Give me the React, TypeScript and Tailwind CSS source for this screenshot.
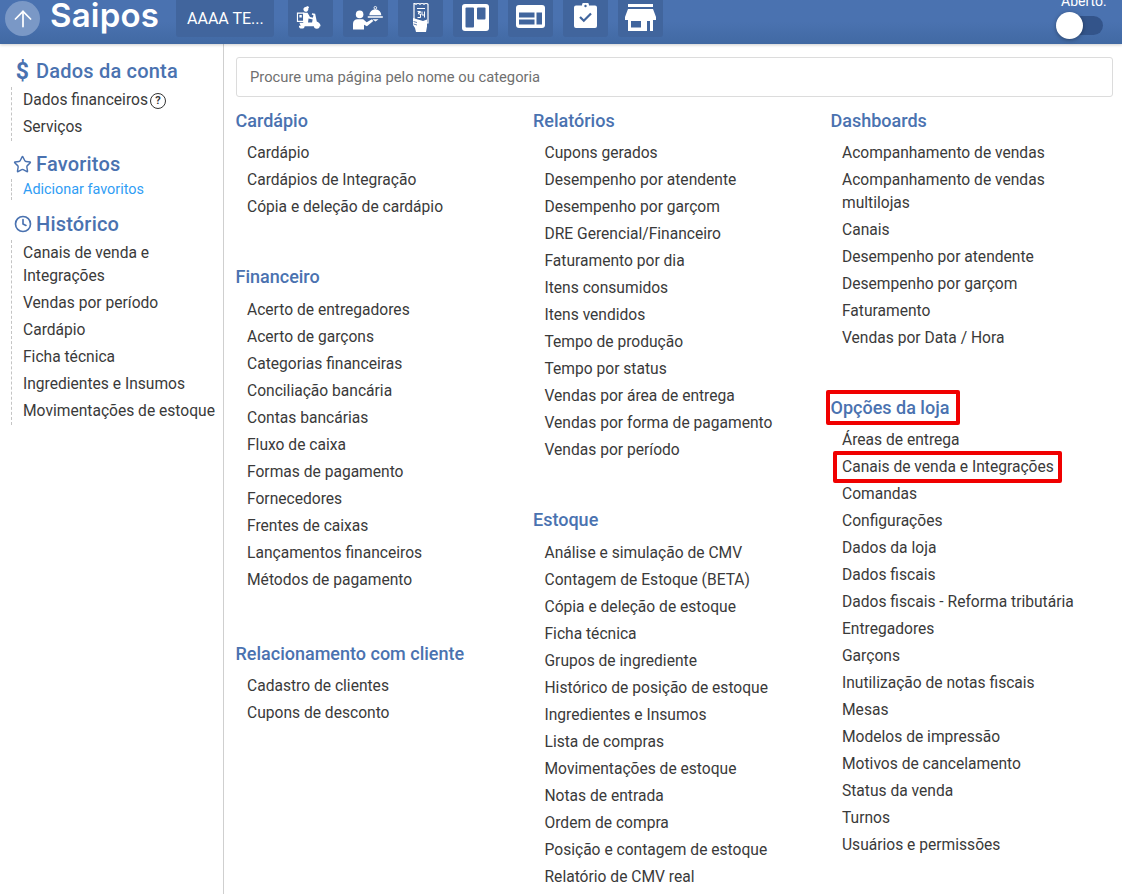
import { ArrowUp, Clock, Star } from 'lucide-react';

const FONT = "font-['Roboto',sans-serif]";

function ScooterIcon() {
  return (
    <svg viewBox="0 0 28 26" className="w-[28px] h-[25px] -mt-[2px] mr-[3px]" fill="white">
      <path d="M9 2.500l4-1.500 1.200 2-1 .5A2.600 2.600 0 1 1 9 2.500z" />
      <path d="M8 8h4.500l2.500 4.500 3.500.8-.4 1.800-4.600-1-.5 4h4.200l1.400-7.600-1.700-.4.3-1.500 3.200.6 1.700 8c2.200.6 3.800 2.400 4 4.800H5.500L4 18.500h4z" />
      <path d="M2 8.500h6.500V17H2z" fill="none" stroke="white" strokeWidth="1.200" />
      <path d="M4 10.500h2.500v2.500H4z" />
      <path d="M3.500 21.500a3 3 0 1 0 6 0z" />
      <path d="M19 21.500a3.100 3.100 0 1 0 6.200 0z" />
    </svg>
  );
}

function WaiterIcon() {
  return (
    <svg viewBox="0 0 34 28" className="w-[30px] h-[25px] -mt-[2px] ml-[4px]" fill="white">
      <circle cx="7.500" cy="10.500" r="4.300" />
      <path d="M0 27.500V21c0-3.200 2.300-5 5-5h6.500l4 3.500 6-3.500 1.500 2-7.200 6-3.300-1.800v5.300z" />
      <path d="M18.500 11.500a6.800 6.800 0 0 1 13.600 0z" />
      <rect x="16.500" y="12.500" width="17.500" height="1.700" rx="0.800" />
      <circle cx="25.300" cy="3" r="1.500" fill="none" stroke="white" strokeWidth="1" />
      <path d="M22 16h7l-3.500 2.500z" />
    </svg>
  );
}

function ReceiptIcon() {
  return (
    <svg viewBox="0 0 16 29" className="w-[16px] h-[29px] -mt-[2px]">
      <path d="M1 0l2 1.300L5 0l2 1.300L9 0l2 1.300L13 0l2 1.300V20H1z" fill="none" stroke="white" strokeWidth="1.200" />
      <path d="M4 5h8v1H4z" fill="white" />
      <path d="M4.500 8.500h3v1H5.500v1.500h2v3.500h-3M9 8.500v3.500h2.500M11.500 8.500v6" fill="none" stroke="white" strokeWidth="1" />
      <path d="M0 15l5 1.500 5 1.500 4-1.500v7L13 29H3l-1-4-2-3z" fill="white" />
      <path d="M0.500 18.500l3.500 1M0.500 21l3.500 1" stroke="#41659d" strokeWidth="0.800" />
    </svg>
  );
}

function BoardIcon() {
  return (
    <svg viewBox="0 0 27 27" className="w-[27px] h-[27px] -mt-[2px]">
      <rect width="27" height="27" rx="3" fill="white" />
      <rect x="3.500" y="3.500" width="8.500" height="20" rx="1" fill="#41659d" />
      <rect x="15" y="3.500" width="8.500" height="12" rx="1" fill="#41659d" />
    </svg>
  );
}

function LayoutIcon() {
  return (
    <svg viewBox="0 0 29 23" className="w-[29px] h-[23px] -mt-[5px]">
      <rect width="29" height="23" rx="3" fill="white" />
      <rect x="3" y="7.500" width="15.500" height="5" fill="#41659d" />
      <rect x="3" y="14.500" width="15.500" height="5" fill="#41659d" />
      <rect x="20.500" y="7.500" width="5.500" height="12" fill="#41659d" />
    </svg>
  );
}

function ClipboardIcon() {
  return (
    <svg viewBox="0 0 23 25" className="w-[23px] h-[25px] -mt-[7px]">
      <path d="M2 2.500h6a3.500 3.500 0 0 1 7 0h6a2 2 0 0 1 2 2V23a2 2 0 0 1-2 2H2a2 2 0 0 1-2-2V4.500a2 2 0 0 1 2-2z" fill="white" />
      <circle cx="11.500" cy="3" r="1.200" fill="#41659d" />
      <path d="M6 14l3.800 3.800L17 10.500" fill="none" stroke="#41659d" strokeWidth="2.200" />
    </svg>
  );
}

function StoreIcon() {
  return (
    <svg viewBox="0 0 31 27" className="w-[31px] h-[27px] -mt-[2px]">
      <rect x="3" y="0" width="25" height="3" fill="white" />
      <path d="M3 5h25l3 8v3H0v-3z" fill="white" />
      <path d="M3 16h25v11H3z" fill="white" />
      <rect x="6" y="17" width="10" height="6.500" fill="#41659d" />
      <rect x="22" y="17" width="3" height="10" fill="#41659d" />
    </svg>
  );
}

function TopButton({ children }: { children: React.ReactNode }) {
  return (
    <div className="w-[45px] h-[37px] rounded-b-[3px] bg-[#41659d] flex items-center justify-center overflow-hidden">
      {children}
    </div>
  );
}

function Header() {
  return (
    <header className="h-[44px] flex items-start bg-gradient-to-b from-[#4a72b0] via-[#4a72b0] to-[#4169a3] shadow-[0_1px_3px_rgba(0,0,0,0.2)] relative">
      <div className="ml-[5px] mt-[1px] w-[35px] h-[35px] rounded-full bg-[#7a98c6] flex items-center justify-center">
        <ArrowUp className="w-[26px] h-[26px] text-white" strokeWidth={1.6} />
      </div>
      <div className="ml-[10px] w-[126px] h-[44px] font-['Inter',sans-serif] font-semibold text-white text-[33px] leading-[30px] tracking-[0.2px]">
        Saipos
      </div>
      <div className="w-[98px] h-[37px] rounded-b-[3px] bg-[#41659d] text-white text-[16px] flex items-center pl-[11px]">
        AAAA TE...
      </div>
      <div className="ml-[14px] flex gap-[10px]">
        <TopButton><ScooterIcon /></TopButton>
        <TopButton><WaiterIcon /></TopButton>
        <TopButton><ReceiptIcon /></TopButton>
        <TopButton><BoardIcon /></TopButton>
        <TopButton><LayoutIcon /></TopButton>
        <TopButton><ClipboardIcon /></TopButton>
        <TopButton><StoreIcon /></TopButton>
      </div>
      <div className="ml-auto mr-[19px] relative w-[46px] mt-[16px]">
        <span className="absolute left-[4px] -top-[22px] text-white text-[14px] leading-[14px]">Aberto:</span>
        <div className="relative h-[19px] rounded-full bg-[#33548a]">
          <div className="absolute -left-[1px] -top-[4.500px] w-[27px] h-[27px] rounded-full bg-white shadow-[0_1px_4px_rgba(0,0,0,0.35)]" />
        </div>
      </div>
    </header>
  );
}

function SideTitle({ icon, label }: { icon: React.ReactNode; label: string }) {
  return (
    <div className="flex items-center h-[26px] text-[#4a72b0] text-[20px] font-medium tracking-[0.2px]">
      <span className="w-[36px] flex justify-center pl-[9px] shrink-0">{icon}</span>
      {label}
    </div>
  );
}

function SideList({ items }: { items: string[] }) {
  return (
    <ul className="ml-[11px] pl-[11px] border-l border-dashed border-[#c4c4c4] text-[15.6px] text-[#3a3a3a]">
      {items.map((item) => (
        <li key={item} className="py-[2px] leading-[23px]">{item}</li>
      ))}
    </ul>
  );
}

function Sidebar() {
  return (
    <aside className="w-[224px] shrink-0 border-r border-[#cfcfcf] pt-[14px]">
      <SideTitle icon={<span className="text-[23px] font-bold leading-none">$</span>} label="Dados da conta" />
      <ul className="mt-[3px] ml-[11px] pl-[11px] border-l border-dashed border-[#c4c4c4] text-[15.6px] text-[#3a3a3a]">
        <li className="py-[2px] leading-[23px] flex items-center gap-[2px]">
          Dados financeiros
          <span className="w-[16px] h-[16px] rounded-full border-[1.5px] border-[#333] text-[11px] font-bold leading-none flex items-center justify-center">?</span>
        </li>
        <li className="py-[2px] leading-[23px]">Serviços</li>
      </ul>
      <div className="mt-[10px] mb-[2px]">
        <SideTitle icon={<Star className="w-[19px] h-[19px]" strokeWidth={1.8} />} label="Favoritos" />
      </div>
      <div className="ml-[11px] pl-[11px] border-l border-dashed border-[#c4c4c4] text-[14.4px] leading-[21px] text-[#2f9df4]">
        Adicionar favoritos
      </div>
      <div className="mt-[11px] mb-[3px]">
        <SideTitle icon={<Clock className="w-[18px] h-[18px]" strokeWidth={2.2} />} label="Histórico" />
      </div>
      <SideList items={['Canais de venda e Integrações', 'Vendas por período', 'Cardápio', 'Ficha técnica', 'Ingredientes e Insumos', 'Movimentações de estoque']} />
    </aside>
  );
}

type Section = { title: string; items: string[]; mark?: string; titleMark?: boolean; gap: string; headGap: string };

const columns: Section[][] = [
  [
    { title: 'Cardápio', gap: 'mt-0', headGap: 'mb-[6px]', items: ['Cardápio', 'Cardápios de Integração', 'Cópia e deleção de cardápio'] },
    { title: 'Financeiro', gap: 'mt-[43px]', headGap: 'mb-[7px]', items: ['Acerto de entregadores', 'Acerto de garçons', 'Categorias financeiras', 'Conciliação bancária', 'Contas bancárias', 'Fluxo de caixa', 'Formas de pagamento', 'Fornecedores', 'Frentes de caixas', 'Lançamentos financeiros', 'Métodos de pagamento'] },
    { title: 'Relacionamento com cliente', gap: 'mt-[47px]', headGap: 'mb-[6px]', items: ['Cadastro de clientes', 'Cupons de desconto'] },
  ],
  [
    { title: 'Relatórios', gap: 'mt-0', headGap: 'mb-[6px]', items: ['Cupons gerados', 'Desempenho por atendente', 'Desempenho por garçom', 'DRE Gerencial/Financeiro', 'Faturamento por dia', 'Itens consumidos', 'Itens vendidos', 'Tempo de produção', 'Tempo por status', 'Vendas por área de entrega', 'Vendas por forma de pagamento', 'Vendas por período'] },
    { title: 'Estoque', gap: 'mt-[43px]', headGap: 'mb-[7px]', items: ['Análise e simulação de CMV', 'Contagem de Estoque (BETA)', 'Cópia e deleção de estoque', 'Ficha técnica', 'Grupos de ingrediente', 'Histórico de posição de estoque', 'Ingredientes e Insumos', 'Lista de compras', 'Movimentações de estoque', 'Notas de entrada', 'Ordem de compra', 'Posição e contagem de estoque', 'Relatório de CMV real'] },
  ],
  [
    { title: 'Dashboards', gap: 'mt-0', headGap: 'mb-[6px]', items: ['Acompanhamento de vendas', 'Acompanhamento de vendas multilojas', 'Canais', 'Desempenho por atendente', 'Desempenho por garçom', 'Faturamento', 'Vendas por Data / Hora'] },
    { title: 'Opções da loja', gap: 'mt-[43px]', headGap: 'mb-[6px]', titleMark: true, mark: 'Canais de venda e Integrações', items: ['Áreas de entrega', 'Canais de venda e Integrações', 'Comandas', 'Configurações', 'Dados da loja', 'Dados fiscais', 'Dados fiscais - Reforma tributária', 'Entregadores', 'Garçons', 'Inutilização de notas fiscais', 'Mesas', 'Modelos de impressão', 'Motivos de cancelamento', 'Status da venda', 'Turnos', 'Usuários e permissões'] },
  ],
];

function MenuSection({ section }: { section: Section }) {
  return (
    <section className={section.gap}>
      <h3 className={`relative -ml-[0.5px] h-[26px] ${section.headGap} text-[18px] leading-[26px] font-medium text-[#4a72b0]`}>
        {section.title}
        {section.titleMark && (
          <span className="absolute -left-[5px] -top-[5px] w-[134px] h-[35px] border-[4px] border-[#f00000] rounded-[2px]" />
        )}
      </h3>
      <ul className="pl-[11px] text-[15.6px] text-[#3a3a3a]">
        {section.items.map((item) => (
          <li key={item} className="relative py-[2px] leading-[23px]">
            {item}
            {item === section.mark && (
              <span className="absolute -left-[9px] -top-[3px] w-[229px] h-[32px] border-[4px] border-[#f00000] rounded-[2px]" />
            )}
          </li>
        ))}
      </ul>
    </section>
  );
}

export default function App() {
  return (
    <div className={`${FONT} w-[1122px] h-[894px] overflow-hidden bg-white flex flex-col`}>
      <Header />
      <div className="flex flex-1 min-h-0">
        <Sidebar />
        <main className="flex-1 pl-[12px] pr-[9px] pt-[13px] min-w-0">
          <div className="h-[40px] border border-[#dcdcdc] rounded-[3px] pl-[13px] flex items-center text-[14.75px] text-[#707070]">
            Procure uma página pelo nome ou categoria
          </div>
          <div className="mt-[11px] grid grid-cols-[297.5px_297.5px_1fr]">
            {columns.map((col) => (
              <div key={col[0].title}>
                {col.map((section) => (
                  <MenuSection key={section.title} section={section} />
                ))}
              </div>
            ))}
          </div>
        </main>
      </div>
    </div>
  );
}
